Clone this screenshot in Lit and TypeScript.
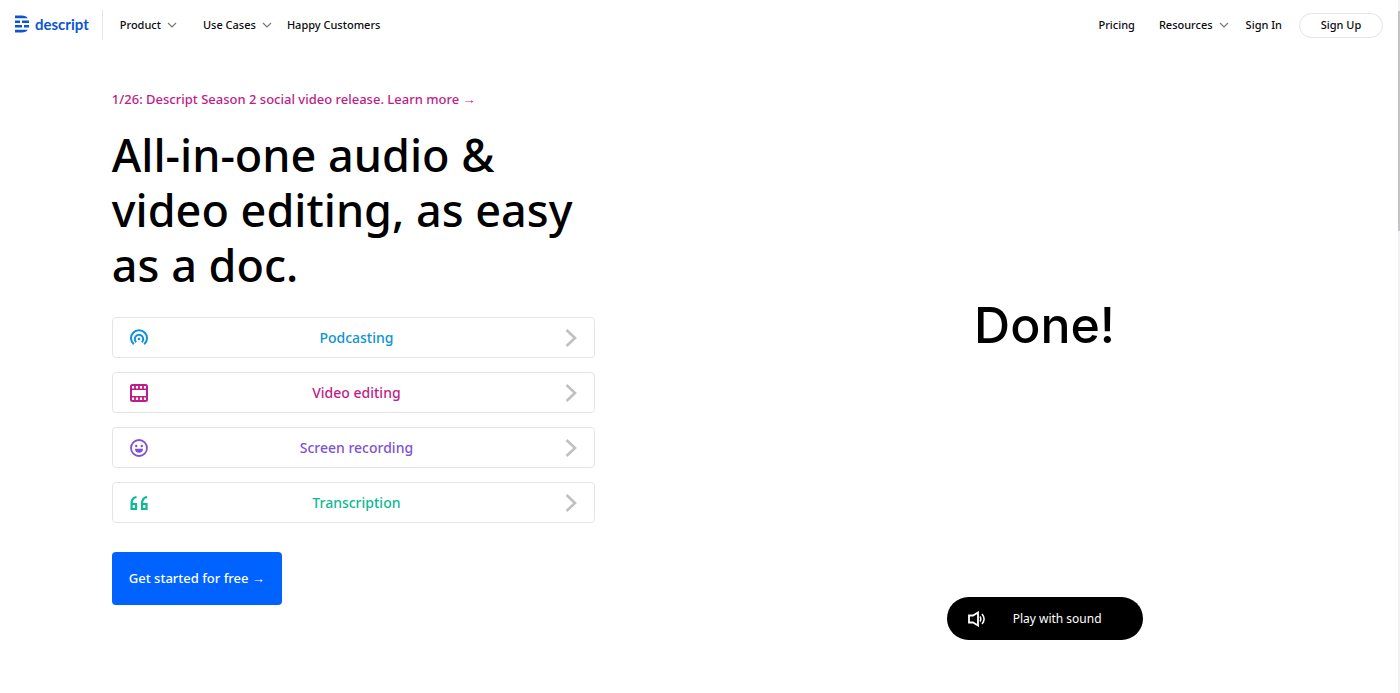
import { LitElement, html, css, svg } from "lit";
import { customElement } from "lit/decorators.js";
import { classMap } from "lit/directives/class-map.js";

const podcastIcon = svg`<g fill="none" stroke="currentColor" stroke-width="2">
  <path d="M3.800 15.300A8 8 0 1 1 14.200 15.300"/><path d="M6.200 13.200A4.200 4.200 0 1 1 11.800 13.200"/></g>
  <circle cx="9" cy="10" r="1.300" fill="currentColor"/>`;

const filmIcon = svg`<rect x="1" y="1" width="16" height="16" rx="1.500" fill="none" stroke="currentColor" stroke-width="2"/>
  <path d="M1 5.300H17M1 12.700H17" stroke="currentColor" stroke-width="1.600"/>
  <path d="M5 1V5M9 1V5M13 1V5M5 13V17M9 13V17M13 13V17" stroke="currentColor" stroke-width="1.800"/>`;

const smileIcon = svg`<circle cx="9" cy="9" r="8" fill="none" stroke="currentColor" stroke-width="1.800"/>
  <circle cx="6.200" cy="7" r="1.200" fill="currentColor"/><circle cx="11.800" cy="7" r="1.200" fill="currentColor"/>
  <path d="M5 9.800H13A4 4 0 0 1 5 9.800Z" fill="currentColor"/>`;

const quoteIcon = svg`<g fill="none" stroke="currentColor" stroke-width="2.200">
  <path d="M6.500 3C3 3.500 1.600 6 1.600 9.500V15H6V10H1.600"/>
  <path d="M17 3C13.500 3.500 12.100 6 12.100 9.500V15H16.500V10H12.100"/></g>`;

const options = [
  { id: "podcasting", label: "Podcasting", icon: podcastIcon },
  { id: "video", label: "Video editing", icon: filmIcon },
  { id: "screen", label: "Screen recording", icon: smileIcon },
  { id: "transcription", label: "Transcription", icon: quoteIcon },
];

const caret = html`<svg class="caret" viewBox="0 0 10 6" aria-hidden="true">
  <path d="M1 1L5 5L9 1" fill="none" stroke="currentColor" stroke-width="1.200"/>
</svg>`;

@customElement("site-header")
export class SiteHeader extends LitElement {
  static styles = css`
    :host { display: block; }
    .bar { display: flex; align-items: center; height: 50px; padding: 0 15px 0 14px; }
    .brand {
      display: flex; align-items: center; gap: 5px; box-sizing: border-box; height: 30px; padding: 0 13px 2px 0;
      border-right: 1px solid #e6e6e8; color: #0b56cf; text-decoration: none;
      font: 700 15px/20px Lato, sans-serif;
    }
    .mark { width: 16px; height: 18px; }
    .links { display: flex; align-items: center; }
    .main { gap: 26px; padding-left: 17px; flex: 1; }
    .side { gap: 17px; }
    .item {
      display: flex; align-items: center; gap: 6px; padding: 0; border: 0; background: none;
      color: #0b0b0f; text-decoration: none; cursor: pointer; white-space: nowrap;
      font: 500 11px/16px "Noto Sans", sans-serif;
    }
    .pricing { margin-right: 7px; }
    .caret { width: 10px; height: 6px; color: #77777c; }
    .main .menu + .item:last-child { margin-left: -11px; }
    .signup {
      justify-content: center; box-sizing: border-box; width: 84px; height: 25px;
      border: 1px solid #e4e4e6; border-radius: 13px;
    }
  `;

  render() {
    return html`<header class="bar">
      <a class="brand" href="#">
        <svg class="mark" viewBox="0 0 16 18" aria-hidden="true">
          <path d="M1 0.500H8Q12 0.500 13.800 3.200H1ZM1 5.500H6V8H1ZM8 5.500H15V8H8ZM1 10H8V12.500H1ZM10 10H15V12.500H10ZM1 14.800H13.800Q12 17.500 8 17.500H1Z" fill="currentColor"/>
        </svg>
        <span>descript</span>
      </a>
      <nav class="links main">
        <button class="item menu">Product ${caret}</button>
        <button class="item menu">Use Cases ${caret}</button>
        <a class="item" href="#">Happy Customers</a>
      </nav>
      <nav class="links side">
        <a class="item pricing" href="#">Pricing</a>
        <button class="item menu">Resources ${caret}</button>
        <a class="item" href="#">Sign In</a>
        <a class="item signup" href="#">Sign Up</a>
      </nav>
    </header>`;
  }
}

@customElement("hero-section")
export class HeroSection extends LitElement {
  static styles = css`
    :host { display: block; font-family: "Noto Sans", sans-serif; font-weight: 500; }
    .hero { display: grid; grid-template-columns: 1fr 1fr; column-gap: 208px; padding: 39px 8% 52px; }
    .news { display: block; color: #c01c88; font-size: 13px; line-height: 20px; text-decoration: none; }
    .title { margin: 18px 0 25px; color: #000; font-size: 45px; font-weight: 500; line-height: 55px; }
    .options { display: grid; gap: 14px; margin: 0 0 29px; padding: 0; list-style: none; }
    .option {
      display: flex; align-items: center; box-sizing: border-box; height: 41px; padding: 0 17px;
      border: 1px solid #e5e5e7; border-radius: 4px; text-decoration: none;
      font-size: 14px; line-height: 20px;
    }
    .icon { width: 18px; height: 18px; }
    .label { flex: 1; text-align: center; }
    .next { width: 12px; height: 18px; color: #c0c0c2; }
    .podcasting { color: #0f93d6; }
    .video { color: #c01c88; }
    .screen { color: #7d52d6; }
    .transcription { color: #0cb994; }
    .start {
      padding: 16px 17px; border: 0; border-radius: 4px; background: #0062ff; color: #fff;
      cursor: pointer; font: 500 13px/21px "Noto Sans", sans-serif;
    }
    .demo { display: grid; grid-template-rows: 1fr auto; justify-items: center; margin-bottom: -35px; }
    .caption { margin: 0 0 36px; align-self: center; color: #000; font: 500 50px/60px Inter, sans-serif; }
    .sound {
      display: flex; align-items: center; box-sizing: border-box; width: 196px; height: 43px;
      padding: 0 41px 0 21px; border: 0; border-radius: 22px; background: #000; color: #fff;
      cursor: pointer; font: 400 12px/18px "Noto Sans", sans-serif;
    }
    .speaker { width: 18px; height: 16px; }
    .sound .text { flex: 1; text-align: right; white-space: nowrap; }
  `;

  render() {
    return html`<main class="hero">
      <section>
        <a class="news" href="#">1/26: Descript Season 2 social video release. Learn more →</a>
        <h1 class="title">All-in-one audio &amp; video editing, as easy as a doc.</h1>
        <ul class="options">
          ${options.map(
            (o) => html`<li>
              <a class=${classMap({ option: true, [o.id]: true })} href="#">
                <svg class="icon" viewBox="0 0 18 18" aria-hidden="true">${o.icon}</svg>
                <span class="label">${o.label}</span>
                <svg class="next" viewBox="0 0 12 18" aria-hidden="true">
                  <path d="M1.500 1L10 9L1.500 17" fill="none" stroke="currentColor" stroke-width="2.600"/>
                </svg>
              </a>
            </li>`
          )}
        </ul>
        <button class="start">Get started for free →</button>
      </section>
      <section class="demo">
        <p class="caption">Done!</p>
        <button class="sound">
          <svg class="speaker" viewBox="0 0 18 16" aria-hidden="true">
            <g fill="none" stroke="currentColor" stroke-width="1.800">
              <path d="M1 4.500H5L10 1.500V14.500L5 11.500H1Z"/>
              <path d="M12 5.500Q13.600 8 12 10.500M14 3Q18.200 8 14 13" stroke-width="1.500"/>
            </g>
          </svg>
          <span class="text">Play with sound</span>
        </button>
      </section>
    </main>`;
  }
}

@customElement("app-root")
export class AppRoot extends LitElement {
  static styles = css`
    :host { display: grid; grid-template-columns: 1fr 2px; min-height: 100vh; background: #fff; }
    .track { padding-top: 11px; background: #f1f1f1; }
    .thumb { height: 220px; background: #c4c4c6; }
  `;

  render() {
    return html`<div>
        <site-header></site-header>
        <hero-section></hero-section>
      </div>
      <div class="track" aria-hidden="true"><div class="thumb"></div></div>`;
  }
}
